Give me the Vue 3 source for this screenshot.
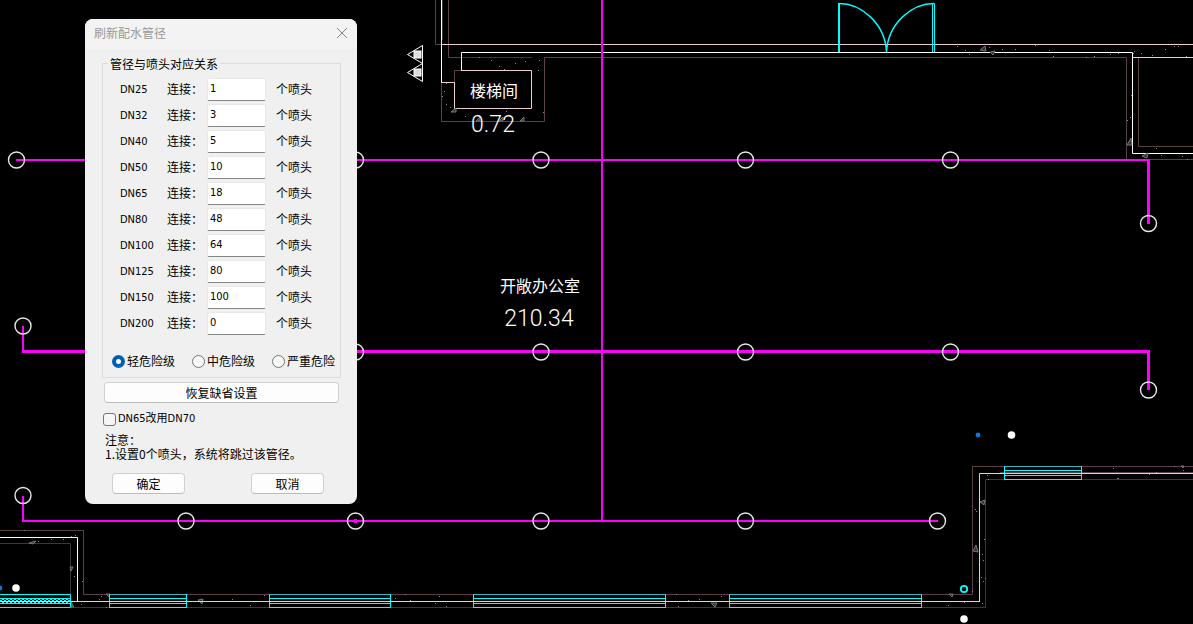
<script setup>
import { ref } from 'vue'

const defaults = [
  ['DN25', '1'], ['DN32', '3'], ['DN40', '5'], ['DN50', '10'], ['DN65', '18'],
  ['DN80', '48'], ['DN100', '64'], ['DN125', '80'], ['DN150', '100'], ['DN200', '0'],
]
const rows = ref(defaults.map(([name, count]) => ({ name, count })))
const levels = ['轻危险级', '中危险级', '严重危险']
const level = ref('轻危险级')
const useDn70 = ref(false)

function restore() {
  rows.value = defaults.map(([name, count]) => ({ name, count }))
}

const heads = [
  [16.5, 160], [355.5, 160], [541, 160], [745.5, 160], [950.5, 160], [1148.5, 223.5],
  [23, 326], [355.5, 352], [541, 352], [745.5, 352], [950.5, 352], [1148.5, 390],
  [23, 495.5], [186, 521], [355.5, 521], [541, 521], [745.5, 521], [937.5, 521],
]
const windows = [[109, 77], [269, 121], [473, 192], [729, 192]]
const specks = [
  [479, 57], [491, 60], [525, 61], [515, 63], [539, 60], [538, 70], [504, 69], [499, 66],
  [446, 83], [444, 91], [442, 96], [446, 104], [450, 107], [465, 116], [506, 111], [543, 112],
  [957, 46], [965, 50], [969, 54], [989, 47], [1002, 49], [1015, 49], [1035, 45], [1049, 50],
  [1053, 56], [1086, 57], [1094, 56], [1110, 54], [1118, 53], [1134, 51], [1133, 53],
  [1141, 53], [1152, 55], [1165, 49], [1174, 46], [1178, 46], [1186, 56], [1131, 95],
  [1130, 117], [1127, 120], [1156, 148], [1161, 155], [1182, 156], [1187, 159],
  [987, 475], [988, 479], [1113, 468], [1117, 478], [1118, 478], [1149, 474], [1156, 472],
  [1183, 470], [1174, 466], [975, 509], [976, 511], [984, 539], [982, 554], [983, 560],
  [981, 577], [985, 578], [983, 581], [972, 591], [982, 603], [964, 602], [948, 605],
  [24, 530], [38, 541], [51, 539], [63, 539], [71, 536], [75, 535], [74, 576], [82, 581],
  [99, 599], [101, 596], [81, 604], [106, 607], [232, 599], [250, 605], [264, 595],
  [395, 598], [405, 594], [410, 600], [439, 596], [435, 603], [446, 606], [676, 594],
  [688, 600], [699, 599], [678, 606], [721, 596],
]
const chips = [
  'M451 112h5v-4z', 'M476 121l4-4v4z', 'M499 121l4-4v4z', 'M520 121l4-4v4z',
  'M980 50l5-4 1 5z', 'M990 52l5-1-2 4z', 'M1127 145l4-7 1 7z', 'M1142 156l6-3-1 5z',
  'M980 502l5-2-1 5z', 'M973 551l3-6 2 7z', 'M949 594l4 0-1 3z', 'M29 543l7-2-3 3z',
  'M70 567l3 0-2 4z', 'M71 602l3 5h-3z', 'M106 594l4 0-1 3z', 'M198 600l5-1-1 5z',
  'M711 603l6 0-2 4z', 'M1181 466l3 0-1 2z',
]
</script>

<template>
  <main class="workspace">
    <svg class="drawing" viewBox="0 0 1193 624" preserveAspectRatio="xMinYMin slice" role="img" aria-label="喷淋平面图">
      <defs>
        <pattern id="hatch" width="4" height="4" patternUnits="userSpaceOnUse">
          <path d="M0 0h2v2h2v2h-2v-2h-2z" fill="#00ffff" />
        </pattern>
      </defs>

      <g class="wall">
        <path class="mauve" d="M435.500 0V44.500H441M448.500 0V57.500H461M441.500 82V121.500H544.500V57.500H1126.500V159.500M1138.500 57V146.500H1193M1150 159.500H1193M454.500 83V70.500H461" />
        <path class="mauve" d="M1193 466.500H972.500V594.500H83.500V530.500H0M1000 472.500H1193" />
        <path class="gray" d="M461 57.500H532M1193 479.500H985.500V607.500H71M0 543.500H70.500V594M442.500 0V40" />
        <path class="pink" d="M441 44.500H1193M1132 57.500H1193M441 82.500H454.500V108.500H531.500V70.500H461M1193 473.500H979.500V601" />
        <path class="white" d="M441.500 0V82M461.500 70V52.500H1132.500V153.500H1193M0 537.500H77.500V601" />
      </g>

      <g class="chips"><path v-for="c in chips" :key="c" :d="c" /></g>
      <g class="specks"><rect v-for="(s, i) in specks" :key="i" :x="s[0]" :y="s[1]" width="1" height="1" /></g>

      <g class="glass">
        <path d="M839 3V52" stroke-width="2" />
        <path d="M932.500 52V3.500H934.500V52" />
        <path d="M839 3.500C861 3.500 885 23 886.500 52C888 23 912 3.500 934 3.500" stroke-width="1.400" />
        <g v-for="w in windows" :key="w[0]">
          <rect :x="w[0] + 0.500" y="594.500" :width="w[1]" height="13" />
          <path :d="`M${w[0]} 598.500h${w[1]}M${w[0]} 603.500h${w[1]}`" />
          <path class="edge" :d="`M${w[0] + 1} 594.500h${w[1] - 1}`" />
        </g>
        <rect x="1004.500" y="466.500" width="77" height="13" />
        <path d="M1004 470.500h77M1004 475.500h77" />
        <path class="edge" d="M1005 466.500h76" />
        <rect x="-2" y="598" width="72" height="5" fill="url(#hatch)" stroke="none" />
        <path d="M0 594.500H70.500V607.500H0M0 598.500H70M0 603.500H70" />
      </g>
      <path class="wall pink" d="M0 601.500H980M1004 473.500H1082" />

      <g class="pipe">
        <path d="M16 160H1149M602 0V521M23 326V352M23 496V521H938" stroke-width="2" />
        <path d="M22 351.500H1148.500V390M1148.500 159V224" stroke-width="3" />
      </g>
      <g class="heads">
        <circle v-for="(h, i) in heads" :key="i" :cx="h[0]" :cy="h[1]" r="8" />
      </g>
      <rect x="354" y="519" width="3" height="4" fill="#ff00ff" />

      <g class="marks">
        <path d="M407.500 54.500L422.500 45.500V63.500ZM407.500 72.500L422.500 63.500V81.500Z" />
        <rect x="414" y="51" width="7" height="7" />
        <rect x="414" y="69" width="7" height="7" />
      </g>
      <g fill="#ffffff">
        <circle cx="1011.500" cy="435" r="3.800" />
        <circle cx="964" cy="619" r="3.800" />
        <circle cx="16" cy="588" r="3.800" />
      </g>
      <circle cx="978" cy="435" r="2.400" fill="#0a78dc" />
      <circle cx="0" cy="588" r="2.400" fill="#0a78dc" />
      <circle cx="964" cy="589" r="3.200" fill="none" stroke="#00ffff" stroke-width="1.800" />

      <g class="room">
        <text x="494" y="97">楼梯间</text>
        <text x="540" y="292">开敞办公室</text>
        <text class="area" x="493" y="132">0.72</text>
        <text class="area" x="539" y="326">210.34</text>
      </g>
    </svg>

    <form class="dialog" @submit.prevent>
      <header class="title">
        <h1>刷新配水管径</h1>
        <button class="close" type="button" aria-label="关闭">
          <svg width="12" height="12" viewBox="0 0 12 12"><path d="M1 1L11 11M11 1L1 11" stroke="#858585" fill="none" /></svg>
        </button>
      </header>

      <div class="body">
        <fieldset class="group">
          <legend>管径与喷头对应关系</legend>
          <div v-for="row in rows" :key="row.name" class="row">
            <span class="size">{{ row.name }}</span>
            <label :for="row.name">连接：</label>
            <input :id="row.name" v-model="row.count" type="text" />
            <span class="unit">个喷头</span>
          </div>
          <div class="levels">
            <label v-for="l in levels" :key="l">
              <input v-model="level" type="radio" name="level" :value="l" />{{ l }}
            </label>
          </div>
        </fieldset>

        <button class="btn wide" type="button" @click="restore">恢复缺省设置</button>
        <label class="check"><input v-model="useDn70" type="checkbox" />DN65改用DN70</label>
        <div class="note">
          <p>注意：</p>
          <p>1.设置0个喷头，系统将跳过该管径。</p>
        </div>
        <div class="actions">
          <button class="btn" type="submit">确定</button>
          <button class="btn" type="button">取消</button>
        </div>
      </div>
    </form>
  </main>
</template>

<style>
body {
  margin: 0;
  background: #000;
}
</style>

<style scoped>
.workspace {
  position: relative;
  min-height: 100vh;
  overflow: hidden;
  background: #000;
}
.drawing {
  display: block;
  width: 100%;
  height: 100vh;
}
.wall { fill: none; }
.mauve { stroke: #5c3f4e; }
.gray { stroke: #3a3a3a; }
.pink { stroke: #eccad6; }
.white { stroke: #fff; }
.chips { fill: #333; stroke: #777; }
.specks { fill: #8a8a8a; }
.glass { fill: none; stroke: #00ffff; }
.edge { stroke: #35b4bc; }
.pipe { fill: none; stroke: #ff00ff; }
.heads { fill: none; stroke: #e8e8e8; stroke-width: 1.4; }
.marks { fill: none; stroke: #fff; }
.marks rect { fill: #ddd; stroke: #fff; }
.room {
  fill: #fff;
  font: 16px "Noto Sans CJK SC", sans-serif;
  text-anchor: middle;
}
.area { font: 300 23px Roboto, "Liberation Sans", sans-serif; }

.dialog {
  position: absolute;
  top: 19px;
  left: 85px;
  width: 272px;
  border-radius: 8px;
  overflow: hidden;
  background: #f0f0f0;
  color: #000;
  font: 11px/14px "DejaVu Sans Condensed", "Noto Sans CJK SC", sans-serif;
}
.row label, .levels label, .dialog legend, .dialog p, .unit, .dialog h1, .btn {
  font: 12px/14px "Noto Sans CJK SC", sans-serif;
}
.title {
  display: flex;
  box-sizing: border-box;
  align-items: center;
  justify-content: space-between;
  height: 30px;
  padding: 0 9px 2px;
  background: #f3f3f3;
}
.dialog h1 {
  margin: 0;
  color: #999;
}
.close {
  display: flex;
  padding: 0;
  border: 0;
  background: none;
}
.body {
  padding: 6px 16px 10px 17px;
}
.group {
  margin: 0;
  padding: 5px 4px 9px 17px;
  border: 1px solid #dcdcdc;
}
.group legend {
  margin-left: -12px;
  padding: 2px 2px 0;
}
.row {
  display: grid;
  grid-template-columns: 47px 40px 59px 1fr;
  align-items: center;
  height: 26px;
}
.size { padding-top: 2px; }
.row input {
  box-sizing: border-box;
  width: 100%;
  height: 23px;
  padding: 0 3px 1px 2px;
  border: 1px solid #e8e8e8;
  border-bottom-color: #858585;
  border-radius: 2px;
  outline: 0;
  background: #fff;
  color: #000;
  font: inherit;
}
.unit { padding-left: 10px; }
.levels {
  display: flex;
  gap: 17px;
  margin: 18px 0 0 -8px;
}
.levels label, .check {
  display: flex;
  align-items: center;
  gap: 2px;
  white-space: nowrap;
}
.levels input, .check input {
  appearance: none;
  box-sizing: border-box;
  width: 13px;
  height: 13px;
  margin: 0;
  border: 1px solid #767676;
  background: #f6f6f6;
}
.levels input { border-radius: 50%; }
.levels input:checked {
  border: 4px solid #005fb8;
  background: #fff;
}
.check input { border-radius: 3px; }
.check input:checked { background: #005fb8; }
.btn {
  width: 73px;
  height: 21px;
  padding: 0;
  border: 1px solid #d0d0d0;
  border-bottom-color: #bcbcbc;
  border-radius: 4px;
  background: #fdfdfd;
  color: #000;
}
.wide {
  display: block;
  width: calc(100% - 4px);
  margin: 4px 2px 9px;
}
.check { margin-left: 1px; }
.note { margin: 7px 0 12px 3px; }
.dialog .note p { margin: 0; }
.actions {
  display: flex;
  justify-content: space-between;
  padding: 0 17px 0 10px;
}
</style>
